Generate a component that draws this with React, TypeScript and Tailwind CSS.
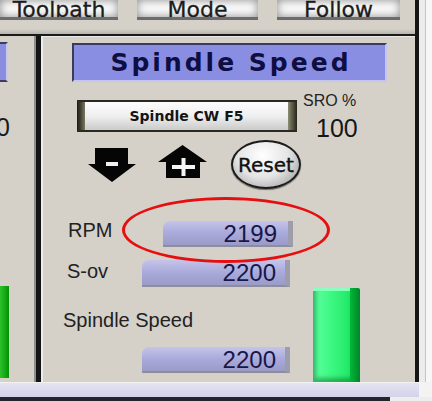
import React from "react";

const sans = "font-['Liberation_Sans',Arial,sans-serif]";
const deja = "font-['DejaVu_Sans',Verdana,sans-serif]";

function TopButton({ label, className }: { label: string; className: string }) {
  return (
    <div
      className={`h-[20px] overflow-hidden bg-[#fbfbfb] border-b-[3px] border-[#6c6c6c] shadow-[inset_0_0_10px_rgba(0,0,0,0.45)] flex justify-center ${className}`}
    >
      <span className={`${deja} whitespace-nowrap text-[22px] leading-[22px] -mt-[1px] text-[#1c1c1c] [-webkit-text-stroke:0.3px_#1c1c1c]`}>
        {label}
      </span>
    </div>
  );
}

function Field({ value, className }: { value: string; className: string }) {
  return (
    <div
      className={`h-[26px] shrink-0 rounded-tl-[7px] bg-linear-to-b from-[#c4c4ea] via-[#aaaadb] to-[#9b9bc8] border-r-[5px] border-b-2 border-r-[#9d9dab] border-b-[#8d8d9d] flex justify-end pr-[9px] ${className}`}
    >
      <span className={`${sans} text-[24px] leading-[25px] text-[#17174a]`}>{value}</span>
    </div>
  );
}

function Label({ text, className }: { text: string; className: string }) {
  return (
    <div className={`shrink-0 whitespace-nowrap ${sans} text-[20px] leading-[20px] text-[#222] ${className}`}>
      {text}
    </div>
  );
}

function DownArrow() {
  return (
    <svg width="48" height="34" viewBox="0 0 48 34">
      <polygon points="7,0 40,0 40,16 48,16 24,34 0,16 7,16" fill="#050505" />
      <rect x="18" y="14" width="12" height="4" fill="#f0f0f0" />
    </svg>
  );
}

function UpArrow() {
  return (
    <svg width="49" height="33" viewBox="0 0 49 33">
      <polygon points="24.5,0 49,17 42,17 42,33 8,33 8,17 0,17" fill="#050505" />
      <rect x="14" y="20" width="23" height="4" fill="#f4f4f4" />
      <rect x="23.5" y="13" width="4" height="18" fill="#f4f4f4" />
    </svg>
  );
}

export default function App() {
  return (
    <div className="w-[432px] h-[401px] bg-[#d5d1c9] flex flex-col overflow-hidden">
      <div className="h-[382px] flex">
        {/* main column */}
        <div className="w-[415px] flex flex-col">
          {/* top button bar */}
          <div className="h-[34px] bg-linear-to-b from-[#d5d1c9] via-[#d5d1c9] via-85% to-[#b8b5ae] flex">
            <TopButton label="Toolpath" className="w-[118px]" />
            <TopButton label="Mode" className="ml-[19px] w-[121px]" />
            <TopButton label="Follow" className="ml-[19px] w-[123px]" />
          </div>
          <div className="h-[2px] bg-[#1a1a1a]" />

          <div className="flex-1 flex">
            {/* left panel (cut off) */}
            <div className="w-[34px] flex flex-col">
              <div className="mt-[6px] w-[8px] h-[40px] bg-[#8a8ce0] border-y-2 border-r-2 border-y-[#3c3c5c] border-r-[#c9c9ef]" />
              <div className="mt-[33px] w-[10px] overflow-hidden flex justify-end">
                <span className={`${sans} text-[25px] leading-[25px] text-[#1a1a1a]`}>0</span>
              </div>
              <div className="mt-[146px] w-[9px] h-[92px] bg-linear-to-r from-[#2ac22a] to-[#009200]" />
            </div>

            {/* separator */}
            <div className="w-[2px] bg-[#8e8e8e]" />
            <div className="w-[5px] bg-[#141414]" />
            <div className="w-[2px] bg-[#ececec]" />

            {/* right panel */}
            <div className="flex-1 flex flex-col border-t border-[#ebebeb]">
              <div className="mt-[6px] ml-[29px] w-[315px] h-[39px] bg-[#8a8ee2] border-2 border-t-[#3a3a5c] border-l-[#3a3a5c] border-b-[#c4c6f0] border-r-[#c4c6f0] flex items-center justify-center">
                <span className={`${deja} font-bold whitespace-nowrap text-[25px] leading-[30px] tracking-[3px] text-[#0e0e42] pl-[3px]`}>
                  Spindle Speed
                </span>
              </div>

              {/* spindle button + SRO */}
              <div className="mt-[11px] h-[47px] flex">
                <div className="ml-[34px] mt-[7px] w-[220px] h-[32px] flex border-y-2 border-y-[#2a2a22]">
                  <div className="w-[8px] bg-linear-to-r from-[#1a1a10] to-[#7a7a62]" />
                  <div className="flex-1 bg-linear-to-b from-[#fdfdfd] via-[#efefef] to-[#cbcbcb] flex items-center justify-center">
                    <span className={`${deja} font-bold text-[14px] leading-[16px] text-[#141414]`}>
                      Spindle CW F5
                    </span>
                  </div>
                  <div className="w-[9px] bg-linear-to-r from-[#8e8e74] to-[#26261a]" />
                </div>
                <div className="ml-[6px] flex flex-col">
                  <span className={`${sans} text-[16px] leading-[16px] text-[#222]`}>SRO %</span>
                  <span className={`${sans} ml-[13px] mt-[7px] text-[25px] leading-[25px] text-[#161616]`}>
                    100
                  </span>
                </div>
              </div>

              {/* arrows + reset */}
              <div className="h-[50px] flex">
                <div className="ml-[45px] mt-[8px]">
                  <DownArrow />
                </div>
                <div className="ml-[22px] mt-[5px]">
                  <UpArrow />
                </div>
                <div className="ml-[24px] w-[70px] h-[49px] rounded-[50%] border-2 border-[#1c1c1c] bg-radial-[at_45%_30%] from-[#ffffff] via-[#e4e4e4] to-[#8e8e8e] shadow-[0_1px_1px_rgba(0,0,0,0.5)] flex items-center justify-center">
                  <span className={`${deja} text-[20px] leading-[22px] text-[#111] [-webkit-text-stroke:0.4px_#111]`}>Reset</span>
                </div>
              </div>

              {/* RPM */}
              <div className="mt-[30px] h-[26px] flex">
                <Label text="RPM" className="ml-[25px] w-[95px]" />
                <Field value="2199" className="mt-[1px] w-[130px] pr-[11px]" />
              </div>

              {/* S-ov, spindle speed, bar */}
              <div className="mt-[14px] flex">
                <div className="w-[247px] shrink-0 flex flex-col">
                  <div className="h-[27px] flex">
                    <Label text="S-ov" className="ml-[24px] mt-[1px] w-[75px]" />
                    <Field value="2200" className="w-[148px] h-[27px]" />
                  </div>
                  <Label text="Spindle Speed" className="ml-[20px] mt-[23px]" />
                  <Field value="2200" className="ml-[99px] mt-[17px] w-[148px]" />
                </div>
                <div className="ml-[23px] mt-[28px] w-[47px] h-[94px] flex rounded-tr-[2px] overflow-hidden">
                  <div className="flex-1 bg-linear-to-r from-[#5cffa0] via-[#3cf882] to-[#1ee866] border-t-[3px] border-[#8affbd] shadow-[inset_3px_-4px_4px_rgba(0,90,30,0.45)]" />
                  <div className="w-[10px] bg-linear-to-r from-[#00b83a] to-[#008626]" />
                </div>
              </div>
            </div>
          </div>
        </div>
        {/* right edge */}
        <div className="w-[4px] bg-[#151515]" />
        <div className="w-[6px] bg-[#ececec]" />
        <div className="w-[1px] bg-[#c4c4c4]" />
        <div className="flex-1 bg-[#f7f7f7]" />
      </div>

      {/* bottom strip */}
      <div className="h-[1px] bg-[#f2f2f2]" />
      <div className="h-[14px] flex">
        <div className="w-[419px] bg-linear-to-b from-[#e4e4f2] to-[#d2d2ea]" />
        <div className="flex-1 bg-[#f3f3f3]" />
      </div>
      <div className="h-[4px] flex">
        <div className="w-[390px] bg-[#24242e]" />
        <div className="flex-1 bg-[#ededed]" />
      </div>

      {/* red highlight ellipse */}
      <div className="absolute left-[122px] top-[197px] w-[208px] h-[66px] rounded-[50%] border-[3px] border-[#e60f0f] pointer-events-none" />
    </div>
  );
}
